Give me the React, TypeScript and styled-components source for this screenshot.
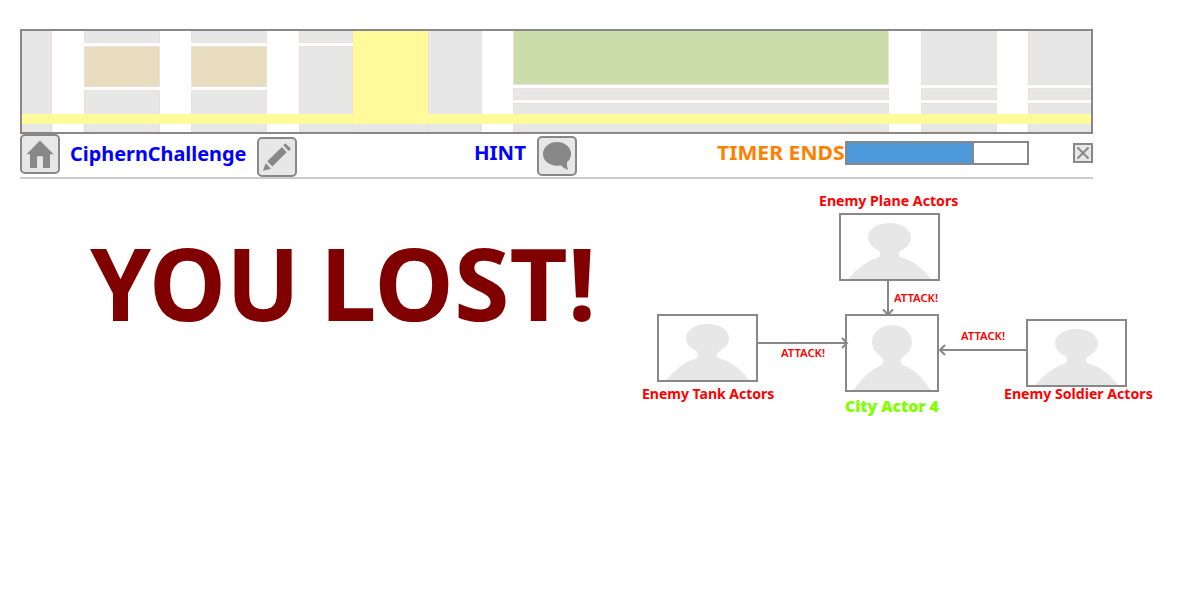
import React from "react";
import styled, { createGlobalStyle } from "styled-components";

const GlobalStyle = createGlobalStyle`
  * { box-sizing: border-box; }
  body { margin: 0; background: #fff; font-family: "Noto Sans", "Open Sans", sans-serif; }
`;

const Page = styled.main`
  position: relative;
  width: 1182px;
  height: 600px;
  padding: 29px 0 0 20px;
  overflow: hidden;
`;

const MapFrame = styled.section`
  position: relative;
  display: flex;
  width: 1073px;
  height: 105px;
  border: 2px solid #888;
  overflow: hidden;
`;

const Street = styled.div`
  flex: 0 0 31px;
`;

const Blocks = styled.div<{ $w: number }>`
  flex: 0 0 ${(p) => p.$w}px;
  display: flex;
  flex-direction: column;
  gap: 3px;
`;

const Block = styled.div<{ $h?: number; $fill?: string }>`
  flex: ${(p) => (p.$h ? `0 0 ${p.$h}px` : "1")};
  background: ${(p) => p.$fill || "#e7e7e7"};
  border: 1px solid #eedfda;
  border-top-width: 0;
  & + & { border-top-width: 1px; }
`;

const Avenue = styled.div`
  flex: 0 0 75px;
  background: linear-gradient(#fffb9b 93px, #e7e7e7 93px);
`;

const MainRoad = styled.div`
  position: absolute;
  left: 0;
  right: 0;
  top: 83px;
  height: 10px;
  background: #fffb9b;
`;

const Toolbar = styled.header`
  display: flex;
  align-items: flex-start;
  width: 1073px;
  height: 45px;
  border-bottom: 2px solid #ccc;
`;

const IconButton = styled.button<{ $top: number }>`
  flex: 0 0 40px;
  height: 40px;
  margin-top: ${(p) => p.$top}px;
  padding: 0;
  border: 2px solid #888;
  border-radius: 5px;
  background: #e7e7e7;
  svg { display: block; width: 36px; height: 36px; }
`;

const Label = styled.div<{ $w: number; $left: number; $color: string; $scale?: number; $top?: number }>`
  flex: 0 0 ${(p) => p.$w}px;
  min-width: 0;
  margin-left: ${(p) => p.$left}px;
  margin-top: ${(p) => p.$top ?? 5}px;
  color: ${(p) => p.$color};
  font-size: 20px;
  line-height: 28px;
  font-weight: 700;
  white-space: nowrap;
  transform: scaleX(${(p) => p.$scale ?? 1});
  transform-origin: 0 50%;
`;

const Gap = styled.div<{ $w: number }>`
  flex: 0 0 ${(p) => p.$w}px;
`;

const Progress = styled.div`
  flex: 0 0 184px;
  height: 24px;
  margin-top: 7px;
  border: 2px solid #888;
`;

const ProgressFill = styled.div`
  width: 127px;
  height: 100%;
  background: #4d98d9;
  border-right: 2px solid #888;
`;

const CloseButton = styled.button`
  flex: 0 0 20px;
  height: 20px;
  margin: 9px 0 0 44px;
  padding: 0;
  border: 2px solid #888;
  background: #e7e7e7;
  svg { display: block; }
`;

const Result = styled.h1`
  display: flex;
  margin: 34px 0 0 70px;
  color: #800000;
  font-size: 100px;
  line-height: 138px;
  font-weight: 700;
  white-space: pre;
`;

const Word = styled.span<{ $w: number; $scale: number }>`
  flex: 0 0 ${(p) => p.$w}px;
  min-width: 0;
  transform: scaleX(${(p) => p.$scale});
  transform-origin: 0 50%;
`;

const Node = styled.figure<{ $x: number; $y: number; $w: number; $h: number }>`
  position: absolute;
  left: ${(p) => p.$x}px;
  top: ${(p) => p.$y}px;
  width: ${(p) => p.$w}px;
  height: ${(p) => p.$h}px;
  margin: 0;
  border: 2px solid #888;
  background: #fff;
  svg { display: block; width: 100%; height: 100%; }
`;

const Caption = styled.span<{ $x: number; $y: number; $size?: number; $weight?: number; $color?: string; $scale?: number }>`
  position: absolute;
  left: ${(p) => p.$x}px;
  top: ${(p) => p.$y}px;
  color: ${(p) => p.$color || "#f00"};
  font-size: ${(p) => p.$size || 14}px;
  line-height: 20px;
  font-weight: ${(p) => p.$weight || 700};
  white-space: nowrap;
  transform: scaleX(${(p) => p.$scale ?? 1});
  transform-origin: 0 50%;
`;

const Links = styled.svg`
  position: absolute;
  left: 0;
  top: 0;
  pointer-events: none;
`;

const Actor = (props: { x: number; y: number; w: number; h: number }) => (
  <Node $x={props.x} $y={props.y} $w={props.w} $h={props.h}>
    <svg viewBox="2 2 97 64" preserveAspectRatio="none" fill="#e7e7e7">
      <path d="M50.500 10C62.500 10 72 16 72 24.500C72 31 67 35 62 37.500Q60 39 60 40V42Q60 43.500 62 44.500C76 48 85 57 92 66H9C17 57 27 48 39 44.500Q41 43.500 41 42V40Q41 38.500 39 37C33 34 29 30 29 24.500C29 16 38.500 10 50.500 10Z" />
    </svg>
  </Node>
);

export default function App() {
  return (
    <>
      <GlobalStyle />
      <Page>
        <MapFrame>
          <Blocks $w={30}><Block /></Blocks>
          <Gap $w={32} />
          <Blocks $w={76}><Block $h={12} /><Block $h={41} $fill="#e8dcbe" /><Block /></Blocks>
          <Street />
          <Blocks $w={76}><Block $h={12} /><Block $h={41} $fill="#e8dcbe" /><Block /></Blocks>
          <Gap $w={32} />
          <Blocks $w={54}><Block $h={12} /><Block /></Blocks>
          <Avenue />
          <Blocks $w={54}><Block /></Blocks>
          <Street />
          <Blocks $w={376}><Block $h={54} $fill="#cadeab" /><Block $h={12} /><Block /></Blocks>
          <Gap $w={32} />
          <Blocks $w={76}><Block $h={54} /><Block $h={12} /><Block /></Blocks>
          <Street />
          <Blocks $w={64}><Block $h={54} /><Block $h={12} /><Block /></Blocks>
          <MainRoad />
        </MapFrame>

        <Toolbar>
          <IconButton $top={0} aria-label="Home">
            <svg viewBox="0 0 36 36" fill="#888">
              <path d="M18 4.500L31.700 18.200H28V32H21V20.200H15V32H8V18.200H4.500Z" />
            </svg>
          </IconButton>
          <Label $w={177} $left={10} $top={6} $scale={0.993} $color="#00f">CiphernChallenge</Label>
          <Gap $w={10} />
          <IconButton $top={3} aria-label="Edit">
            <svg viewBox="0 0 36 36" fill="#888">
              <path d="M4 31.700L6.700 24.300L12 29.700ZM8.300 22.300L23 8L27.700 13.300L13.300 27.500ZM24.300 6.300L26.300 4.300L32 9.700L29.700 12Z" />
            </svg>
          </IconButton>
          <Label $w={53} $left={177} $top={5} $scale={1.02} $color="#00f">HINT</Label>
          <Gap $w={10} />
          <IconButton $top={2} aria-label="Hint">
            <svg viewBox="0 0 36 36" fill="#888">
              <ellipse cx="18" cy="15.900" rx="14" ry="11.900" />
              <path d="M21.500 27L28 23Q27.500 28 29 32Q24 30 21.500 27Z" />
            </svg>
          </IconButton>
          <Label $w={128} $left={140} $scale={1.057} $color="#ff8000">TIMER ENDS</Label>
          <Progress><ProgressFill /></Progress>
          <CloseButton aria-label="Close">
            <svg width="16" height="16" viewBox="0 0 16 16" stroke="#888" strokeWidth="2">
              <path d="M2.500 2.500L13.500 13.500M13.500 2.500L2.500 13.500" />
            </svg>
          </CloseButton>
        </Toolbar>

        <Result>
          <Word $w={230} $scale={0.975}>YOU </Word>
          <Word $w={280} $scale={1.008}>LOST!</Word>
        </Result>

        <Actor x={839} y={213} w={101} h={68} />
        <Actor x={657} y={314} w={101} h={68} />
        <Actor x={845} y={314} w={94} h={78} />
        <Actor x={1026} y={319} w={101} h={68} />
        <Links width="1182" height="600" fill="none" stroke="#888" strokeWidth="2">
          <path d="M888 281V314M883 309.500L888 314.500L893 309.500" />
          <path d="M758 343H847M842 338L847 343L842 348" />
          <path d="M1026 350H940M945 345L940 350L945 355" />
        </Links>
        <Caption $x={819} $y={191} $scale={1.01}>Enemy Plane Actors</Caption>
        <Caption $x={642} $y={384}>Enemy Tank Actors</Caption>
        <Caption $x={1004} $y={384} $scale={1.008}>Enemy Soldier Actors</Caption>
        <Caption $x={894} $y={288} $size={11} $weight={600} $scale={1.025}>ATTACK!</Caption>
        <Caption $x={781} $y={343} $size={11} $weight={600} $scale={1.025}>ATTACK!</Caption>
        <Caption $x={961} $y={326} $size={11} $weight={600} $scale={1.025}>ATTACK!</Caption>
        <Caption $x={845} $y={396} $size={16} $weight={900} $scale={0.98} $color="#80ff00">City Actor 4</Caption>
      </Page>
    </>
  );
}
